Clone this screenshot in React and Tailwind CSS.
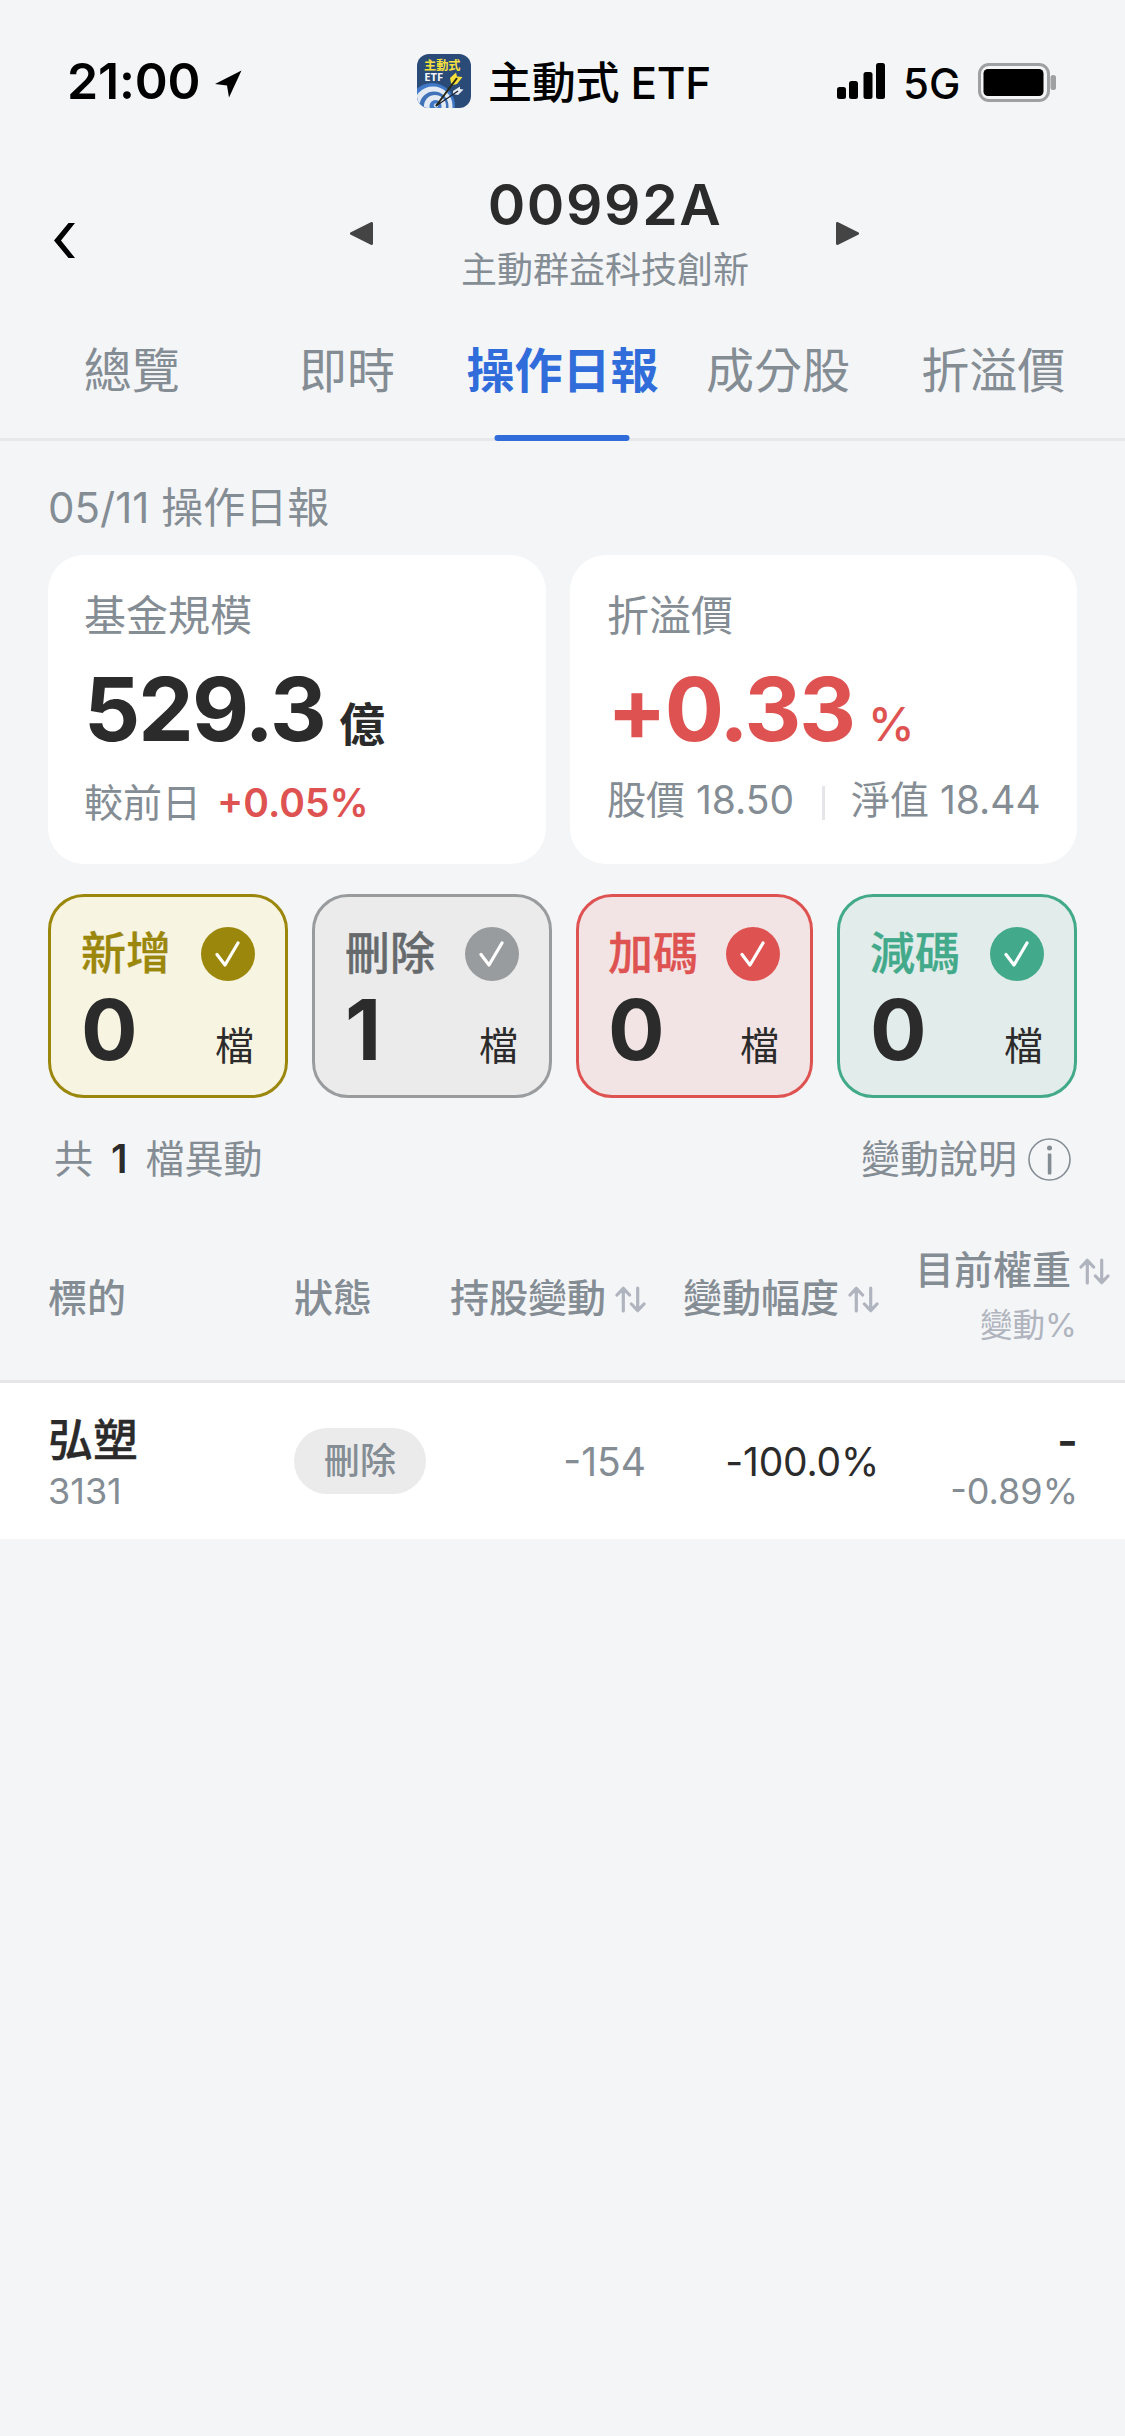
import { clsx } from 'clsx';

const tabs = ['總覽', '即時', '操作日報', '成分股', '折溢價'];

const stats = [
    { label: '新增', count: 0, box: 'border-[#9b870c] bg-[#f7f4e1] pl-[30px]', text: 'text-[#9b870c]', badge: 'bg-[#9b870c]' },
    { label: '刪除', count: 1, box: 'border-[#999c9e] bg-[#ebebeb] pl-[30px]', text: 'text-[#666a6d]', badge: 'bg-[#999c9e]' },
    { label: '加碼', count: 0, box: 'border-[#de5351] bg-[#f2e4e5] pl-[29px]', text: 'text-[#de5351]', badge: 'bg-[#de5351]' },
    { label: '減碼', count: 0, box: 'border-[#42aa8b] bg-[#e2ecea] pl-[30px]', text: 'text-[#42aa8b]', badge: 'bg-[#42aa8b]' },
];

function AppIcon() {
    return (
        <svg width="54" height="54" viewBox="0 0 54 54" className="rounded-[12px]">
            <rect width="54" height="54" fill="#2a4a77" />
            <circle cx="15" cy="52" r="23" fill="#3f78c6" />
            <circle cx="16" cy="52" r="19.5" fill="#e3eaf4" />
            <circle cx="17" cy="52" r="14.5" fill="#3f72b8" />
            <circle cx="18" cy="52" r="11" fill="#e3eaf4" />
            <circle cx="18.5" cy="52" r="6" fill="#3f78c6" />
            <circle cx="19" cy="51.5" r="2.2" fill="#c9d8ee" />
            <path d="M36 40 36 37 43 32.5 43 35 46.5 35.5 41 41Z" fill="#e3e8ef" />
            <path d="M19 52 41 37" stroke="#1c2230" strokeWidth="1.3" />
            <path d="M34 29 33 24 39 18.5 40 22.5 45.5 23 40 30 36 31Z" fill="#f7df3c" />
            <path d="M19 52 40 24" stroke="#2a2812" strokeWidth="2" />
            <text x="7" y="15.5" fontSize="12.2" fontWeight="700" fill="#f7e23c" fontFamily="Noto Sans CJK TC, sans-serif">主動式</text>
            <text x="7.2" y="27" fontSize="11.3" fontWeight="700" fill="#f3f5f8" fontFamily="Noto Sans, sans-serif">ETF</text>
        </svg>
    );
}

function StatusBar() {
    return (
        <div className="mt-[54px] flex h-[54px] items-center text-black">
            <div className="flex w-[417px] items-center pl-[67px]">
                <span className="w-[148px] text-[50px] leading-[54px] font-semibold tracking-[-0.2px]">21:00</span>
                <svg width="27" height="28" viewBox="0 0 27 28" className="mt-[6px]">
                    <path d="M26.5 0.5 0 14 12 15.5 14 27.5Z" />
                </svg>
            </div>
            <AppIcon />
            <span className="mt-[4px] ml-[17px] w-[349px] text-[44px] leading-[54px] font-medium tracking-[-0.3px]">主動式 ETF</span>
            <svg width="48" height="36" viewBox="0 0 48 36">
                <rect x="0" y="24" width="9" height="12" rx="2.5" />
                <rect x="12" y="18" width="9" height="18" rx="2.5" />
                <rect x="26.5" y="9" width="9" height="27" rx="2.5" />
                <rect x="39" y="0" width="9" height="36" rx="2.5" />
            </svg>
            <span className="mt-[6px] ml-[18px] w-[75px] text-[42px] leading-[54px] font-medium">5G</span>
            <svg width="78" height="39" viewBox="0 0 78 39" className="mt-[3px]">
                <rect x="1.5" y="1.5" width="69" height="36" rx="9.5" fill="none" stroke="#9fa0a2" strokeWidth="3" />
                <rect x="5.5" y="6" width="60" height="27" rx="4.5" />
                <rect x="72.5" y="12" width="5.5" height="15" rx="2.5" fill="#9fa0a2" />
            </svg>
        </div>
    );
}

function Header() {
    return (
        <div className="mt-[60px] flex h-[131px] items-center">
            <svg width="22" height="35" viewBox="0 0 22 35" className="mt-[14px] ml-[54px]">
                <path d="M14.5 0H21L7 17.5 21 35H14.5L0 17.5Z" />
            </svg>
            <svg width="23" height="23" viewBox="0 0 23 23" className="ml-[274px]">
                <path d="M21.5 1.5V21.5L1.5 11.5Z" fill="#444" stroke="#444" strokeWidth="3" strokeLinejoin="round" />
            </svg>
            <div className="flex h-full w-[463px] flex-col items-center pl-px">
                <h1 className="text-[57px] leading-[74px] font-semibold tracking-[1.6px] text-[#2b2b2b]">00992A</h1>
                <p className="mt-px text-[36px] leading-[54px] text-[#848c94]">主動群益科技創新</p>
            </div>
            <svg width="23" height="23" viewBox="0 0 23 23">
                <path d="M1.5 1.5V21.5L21.5 11.5Z" fill="#444" stroke="#444" strokeWidth="3" strokeLinejoin="round" />
            </svg>
        </div>
    );
}

function Tabs() {
    return (
        <div className="grid h-[142px] grid-cols-5 border-b-[3px] border-[#e6e8eb] px-6">
            {tabs.map((tab) => {
                const active = tab === '操作日報';
                return (
                    <div
                        key={tab}
                        className={clsx(
                            'relative pt-[4px] text-center text-[48px] leading-[135px] whitespace-nowrap',
                            active ? 'font-bold text-[#306ddb]' : 'text-[#848c94]'
                        )}
                    >
                        {tab}
                        {active && <span className="absolute -bottom-[3px] left-1/2 h-[6px] w-[135px] -translate-x-1/2 rounded-[3px] bg-[#306ddb]" />}
                    </div>
                );
            })}
        </div>
    );
}

function Summary() {
    return (
        <div className="flex gap-6 px-12">
            <div className="h-[309px] w-[498px] rounded-[36px] bg-white pt-[31px] pl-9">
                <div className="text-[42px] leading-[60px] text-[#848c94]">基金規模</div>
                <div className="mt-[9px] flex h-[108px] items-baseline gap-[14px] leading-[108px] text-[#2b2b2b]">
                    <span className="text-[88px] font-bold tracking-[-1.9px]">529.3</span>
                    <span className="text-[46px] font-semibold">億</span>
                </div>
                <div className="mt-[10px] flex gap-[16px] text-[39px] leading-[60px] text-[#848c94]">
                    <span>較前日</span>
                    <span className="font-semibold text-[#de5351]">+0.05%</span>
                </div>
            </div>
            <div className="h-[309px] flex-1 rounded-[36px] bg-white pt-[31px] pl-[37px]">
                <div className="text-[42px] leading-[60px] text-[#848c94]">折溢價</div>
                <div className="mt-[9px] flex h-[108px] items-baseline gap-[14px] leading-[108px] text-[#de5351]">
                    <span className="text-[88px] font-bold tracking-[-2.1px]">+0.33</span>
                    <span className="text-[47px] font-medium">%</span>
                </div>
                <div className="mt-[7px] flex items-center text-[39px] leading-[60px] whitespace-nowrap text-[#848c94]">
                    <span className="w-[215px]">股價 18.50</span>
                    <span className="mt-[5px] mr-[26px] h-[34px] w-[3px] bg-[#e5e5ea]" />
                    <span>淨值 18.44</span>
                </div>
            </div>
        </div>
    );
}

function StatCard({ stat }) {
    return (
        <div className={clsx('h-[204px] rounded-[36px] border-[3px] pr-[31px]', stat.box)}>
            <div className="mt-[30px] flex h-[54px] items-center justify-between">
                <span className={clsx('text-[45px] leading-[54px] font-medium [-webkit-text-stroke:0.3px_currentColor]', stat.text)}>{stat.label}</span>
                <span className={clsx('-mr-px flex size-[54px] items-center justify-center rounded-full', stat.badge)}>
                    <svg width="26" height="26" viewBox="0 0 26 26" fill="none" stroke="#fff" strokeWidth="3.2" strokeLinecap="round" strokeLinejoin="round">
                        <path d="M2 13.5 10 24 23 2" />
                    </svg>
                </span>
            </div>
            <div className="mt-px flex items-baseline justify-between leading-[96px] text-[#2b2b2b]">
                <span className="text-[84px] font-bold">{stat.count}</span>
                <span className="text-[39px]">檔</span>
            </div>
        </div>
    );
}

function SortIcon() {
    return (
        <svg width="31" height="27" viewBox="0 0 31 27" fill="none" stroke="#b0b4be" strokeWidth="3.2" strokeLinecap="round" strokeLinejoin="round" className="mt-[3px] shrink-0">
            <path d="M8.3 25V2.5M2 9 8.3 2.3 14.6 9M22.7 2V24.5M16.4 18 22.7 24.7 29 18" />
        </svg>
    );
}

function HoldingsTable() {
    return (
        <div>
            <div className="flex h-[183px] items-center border-b-[3px] border-[#e5e5ea] pt-[16px] pl-12 text-[39px] leading-[54px] font-medium whitespace-nowrap text-[#848c94]">
                <div className="w-[246px]">標的</div>
                <div className="w-[156px]">狀態</div>
                <div className="flex w-[233px] items-center gap-[9px]">
                    持股變動 <SortIcon />
                </div>
                <div className="flex w-[232px] items-center gap-[9px]">
                    變動幅度 <SortIcon />
                </div>
                <div className="w-[200px]">
                    <div className="flex items-center gap-[8px]">
                        目前權重 <SortIcon />
                    </div>
                    <div className="w-[162px] text-right text-[32.5px] leading-[57px] font-normal text-[#b0b4be]">變動%</div>
                </div>
            </div>

            <div className="flex h-[156px] items-center bg-white pl-12">
                <div className="w-[246px] pt-[6px]">
                    <div className="text-[45px] leading-[54px] font-medium text-[#2b2b2b] [-webkit-text-stroke:0.3px_currentColor]">弘塑</div>
                    <div className="text-[36px] leading-[46px] text-[#848c94]">3131</div>
                </div>
                <div className="w-[132px] rounded-full bg-[#ebebeb] text-center text-[36px] leading-[66px] font-medium text-[#848c94]">刪除</div>
                <div className="w-[220px] pt-[2px] text-right text-[39px] text-[#848c94]">-154</div>
                <div className="w-[233px] pt-[2px] text-right text-[39px] tracking-[-0.2px] text-[#2b2b2b]">-100.0%</div>
                <div className="w-[199px] pt-[6px] text-right">
                    <div className="text-[45px] leading-[54px] font-semibold text-[#2b2b2b]">-</div>
                    <div className="text-[36px] leading-[46px] text-[#848c94]">-0.89%</div>
                </div>
            </div>
        </div>
    );
}

export default function App() {
    return (
        <div className="flex h-[2436px] w-[1125px] flex-col overflow-hidden bg-[#f4f5f7] font-['Inter','Noto_Sans_CJK_TC',sans-serif]">
            <StatusBar />
            <Header />
            <Tabs />

            <div className="mt-[37px] mb-[17px] px-12 text-[42px] leading-[60px] text-[#848c94]">05/11 操作日報</div>
            <Summary />

            <div className="mt-[30px] grid grid-cols-[240px_240px_237px_240px] gap-6 px-12">
                {stats.map((stat) => (
                    <StatCard key={stat.label} stat={stat} />
                ))}
            </div>

            <div className="mt-[31px] mb-[11px] flex h-[60px] items-center justify-between px-[54px] text-[39px] leading-[60px] text-[#848c94]">
                <div className="flex gap-[18px]">
                    <span>共</span>
                    <span className="font-semibold text-[#2b2b2b]">1</span>
                    <span>檔異動</span>
                </div>
                <div className="flex items-center gap-[11px]">
                    變動說明
                    <svg width="43" height="43" viewBox="0 0 43 43" fill="#848c94">
                        <circle cx="21.5" cy="21.5" r="20.5" fill="none" stroke="#848c94" strokeWidth="1.6" />
                        <circle cx="21.5" cy="10" r="2.5" />
                        <rect x="19.8" y="15.5" width="3.6" height="21" rx="1" />
                    </svg>
                </div>
            </div>

            <HoldingsTable />
        </div>
    );
}
